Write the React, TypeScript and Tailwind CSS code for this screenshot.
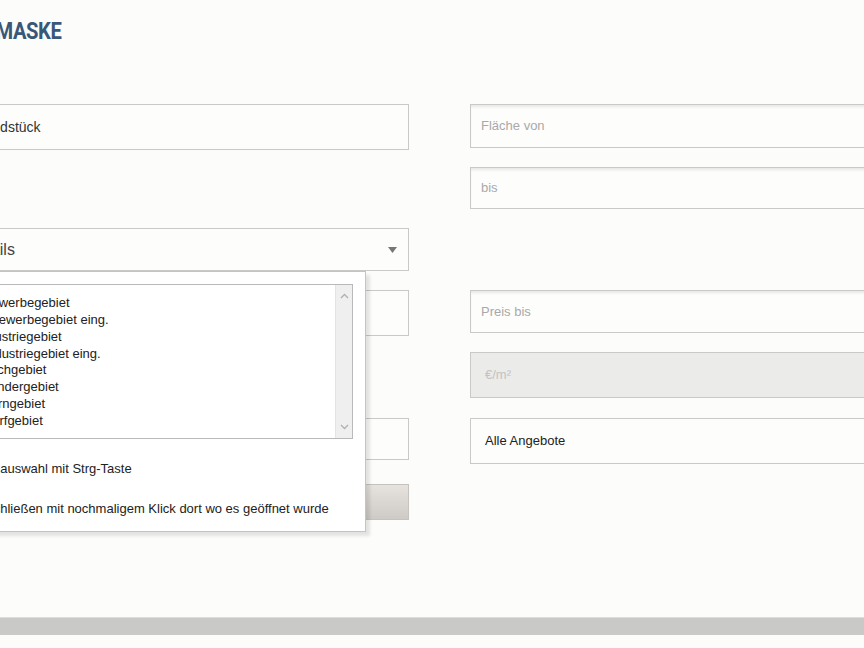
import React from "react";

const items = [
  "GE Gewerbegebiet",
  "GEe Gewerbegebiet eing.",
  "GI Industriegebiet",
  "GIe Industriegebiet eing.",
  "MI Mischgebiet",
  "SO Sondergebiet",
  "MK Kerngebiet",
  "MD Dorfgebiet",
];

function Chevron({ up }: { up?: boolean }) {
  return (
    <svg width="9" height="6" viewBox="0 0 9 6">
      <path
        d={up ? "M1 5L4.5 1.5L8 5" : "M1 1L4.5 4.5L8 1"}
        fill="none"
        stroke="#b0b0b0"
        strokeWidth="1.3"
      />
    </svg>
  );
}

export default function App() {
  return (
    <div className="h-[648px] w-full overflow-hidden bg-[#fcfcfa] font-['Liberation_Sans',Arial,sans-serif]">
      <div className="h-[617px]">
        <div className="ml-[-51px] w-[981px]">
          <h1 className="ml-[-5px] h-[44px] origin-left scale-x-[0.84] pt-[18px] font-['Roboto',sans-serif] text-[24px] font-bold leading-[26px] tracking-[-0.02em] text-[#385779]">
            SUCHMASKE
          </h1>
          <div className="mt-[60px] flex gap-[61px]">
            {/* left column */}
            <div className="flex w-[460px] flex-col">
              <div className="flex h-[46px] items-center border border-[#c9c9c9] bg-[#fdfdfc] pl-[19px] text-[14px] text-[#333]">
                Grundstück
              </div>
              <div className="relative mt-[78px]">
                <div className="flex h-[43px] items-center justify-between border border-[#c9c9c9] bg-[#fdfdfc] pl-[16px] pr-[11px] text-[16px] text-[#444]">
                  <span>Details</span>
                  <svg width="9" height="6" viewBox="0 0 9 6">
                    <path d="M0 0H9L4.5 6Z" fill="#777" />
                  </svg>
                </div>
                <div className="absolute left-[-9px] top-full z-10 h-[261px] w-[426px] border border-[#c4c4c4] bg-white pl-[10px] pr-[12px] pt-[12px] text-[13px] leading-[17px] text-[#222] shadow-[4px_4px_3px_rgba(0,0,0,0.1)]">
                  <div className="flex h-[155px] border border-[#b9b9b9] bg-white">
                    <div className="flex-1 pl-[7px] pt-[10px] leading-[16.86px]">
                      {items.map((t) => (
                        <div key={t} className="whitespace-nowrap">
                          {t}
                        </div>
                      ))}
                    </div>
                    <div className="flex w-[17px] flex-col items-center justify-between border-l border-[#e4e4e4] bg-[#efefef] py-[8px]">
                      <Chevron up />
                      <Chevron />
                    </div>
                  </div>
                  <div className="ml-[-5px] mt-[21px] whitespace-nowrap">
                    Mehrfachauswahl mit Strg-Taste
                  </div>
                  <div className="ml-[-5px] mt-[23px] whitespace-nowrap">
                    Popup schließen mit nochmaligem Klick dort wo es geöffnet wurde
                  </div>
                </div>
              </div>
              <div className="mt-[19px] h-[46px] border border-[#c9c9c9] bg-[#fdfdfc]" />
              <div className="mt-[82px] h-[42px] border border-[#c9c9c9] bg-[#fdfdfc]" />
              <div className="mt-[24px] h-[36px] border border-[#c6c3bf] bg-gradient-to-b from-[#e6e3df] to-[#cecac5]" />
            </div>

            {/* right column */}
            <div className="flex w-[460px] flex-col text-[13px]">
              <div className="flex h-[44px] items-center border border-[#c9c9c9] bg-[#fdfdfc] pl-[10px] text-[#a9a9a9] shadow-[inset_0_3px_3px_-1px_rgba(0,0,0,0.09)]">
                Fläche von
              </div>
              <div className="mt-[19px] flex h-[42px] items-center border border-[#c9c9c9] bg-[#fdfdfc] pl-[10px] text-[#a9a9a9] shadow-[inset_0_3px_3px_-1px_rgba(0,0,0,0.09)]">
                bis
              </div>
              <div className="mt-[81px] flex h-[43px] items-center border border-[#c9c9c9] bg-[#fdfdfc] pl-[10px] text-[#a9a9a9] shadow-[inset_0_3px_3px_-1px_rgba(0,0,0,0.09)]">
                Preis bis
              </div>
              <div className="mt-[19px] flex h-[46px] items-center border border-[#c9c9c9] bg-[#ebebea] pl-[14px] text-[#c2c2c2]">
                €/m²
              </div>
              <div className="mt-[20px] flex h-[46px] items-center border border-[#c9c9c9] bg-[#fdfdfc] pl-[14px] text-[#222]">
                Alle Angebote
              </div>
            </div>
          </div>
        </div>
      </div>
      <div className="h-[18px] border-t border-[#dcdcda] bg-[#c9c9c7]" />
    </div>
  );
}
